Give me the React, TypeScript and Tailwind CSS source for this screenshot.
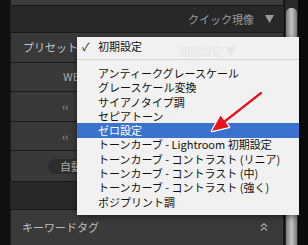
const items = [
  "アンティークグレースケール",
  "グレースケール変換",
  "サイアノタイプ調",
  "セピアトーン",
  "ゼロ設定",
  "トーンカーブ - Lightroom 初期設定",
  "トーンカーブ - コントラスト (リニア)",
  "トーンカーブ - コントラスト (中)",
  "トーンカーブ - コントラスト (強く)",
  "ポジプリント調",
];

const font = { fontFamily: '"Noto Sans CJK JP", "Noto Sans", sans-serif' };

function Row({ children, last }: { children?: React.ReactNode; last?: boolean }) {
  return (
    <div className={`flex h-[29.6px] items-center ${last ? "" : "border-b border-[#1c1c1c]"}`}>{children}</div>
  );
}

export default function App() {
  return (
    <div className="relative flex h-[245px] w-[308px] overflow-hidden bg-[#0b0b0b]" style={font}>
      <div className="w-[10px] shrink-0 bg-[#111]" />

      <div className="flex w-[274px] shrink-0 flex-col">
        <div className="h-[6px] border-x border-b border-[#1a1a1a] bg-[#3c3c3c]" />
        <div className="flex h-[26px] items-center justify-end gap-[11px] bg-[#282828] pr-[10px]">
          <span className="text-[11px] leading-none text-[#9c9c9c]">クイック現像</span>
          <svg width="9" height="8" viewBox="0 0 9 8">
            <path d="M0 0 H9 L4.5 8 Z" fill="#9a9a9a" />
          </svg>
        </div>

        <div className="flex flex-col border border-[#1a1a1a] bg-[#393939]">
          <Row>
            <span className="pl-[12px] text-[11px] leading-none text-[#c4c4c4]">プリセット</span>
          </Row>
          <Row>
            <span className="pl-[52px] text-[11px] leading-none text-[#a8a8a8]">WB</span>
          </Row>
          <Row>
            <span className="pl-[51px] text-[11px] leading-none text-[#9a9a9a]">‹‹</span>
          </Row>
          <Row>
            <span className="pl-[51px] text-[11px] leading-none text-[#9a9a9a]">‹‹</span>
          </Row>
          <Row last>
            <div className="ml-[37px] flex h-[15px] items-center rounded-full bg-[#2d2d2d] px-[12px] text-[11px] leading-none text-[#aaa]">
              自動補正
            </div>
          </Row>
        </div>

        <div className="h-[27px] bg-[#282828]" />

        <div className="flex flex-1 items-center justify-between border-x border-t border-[#1a1a1a] bg-[#3a3a3a] pl-[11px] pr-[15px]">
          <span className="text-[11px] leading-none text-[#bdbdbd]">キーワードタグ</span>
          <svg width="8" height="10" viewBox="0 0 8 10" fill="none" stroke="#a8a8a8" strokeWidth="1.2">
            <path d="M1 4.5 L4 1.5 L7 4.5" />
            <path d="M1 8.5 L4 5.5 L7 8.5" />
          </svg>
        </div>
      </div>

      <div className="flex w-[14px] shrink-0 border-l border-[#111] bg-[#2a2a2a] px-[1px]">
        <div className="mt-[8px] w-full rounded-t-[5px] bg-gradient-to-r from-[#7a7a7a] via-[#c4c4c4] to-[#7a7a7a]" />
      </div>

      <div className="absolute left-[77px] top-[37px] h-[178px] w-[222px] bg-[#f1f1f1] shadow-[0_2px_6px_rgba(0,0,0,0.45)]">
        <span className="absolute left-[102px] top-[9px] text-[11px] leading-none text-[#e6e6e6]">初期設定 ▼</span>
        <div className="relative mt-[2px] flex h-[14.3px] items-center text-[11px] leading-none text-[#111]">
          <span className="w-[21px] pl-[5px]">✓</span>
          <span>初期設定</span>
        </div>
        <div className="my-[6px] h-px bg-[#d6d6d6]" />
        {items.map((t, i) => (
          <div
            key={t}
            className={`flex h-[14.3px] items-center pl-[21px] text-[11px] leading-none ${
              i === 4 ? "bg-[#3a72cf] text-white" : "text-[#111]"
            }`}
          >
            {t}
          </div>
        ))}
      </div>

      <svg className="absolute left-0 top-0" width="308" height="245" viewBox="0 0 308 245">
        <path d="M261 93 L224 122" stroke="#fff" strokeWidth="4.5" strokeLinecap="round" />
        <path d="M212 131 L229 127 L220.5 115.5 Z" fill="#fff" stroke="#fff" strokeWidth="2.5" strokeLinejoin="round" />
        <path d="M261 93 L224 122" stroke="#e8161c" strokeWidth="2.4" strokeLinecap="round" />
        <path d="M212 131 L229 127 L220.5 115.5 Z" fill="#e8161c" />
      </svg>
    </div>
  );
}
